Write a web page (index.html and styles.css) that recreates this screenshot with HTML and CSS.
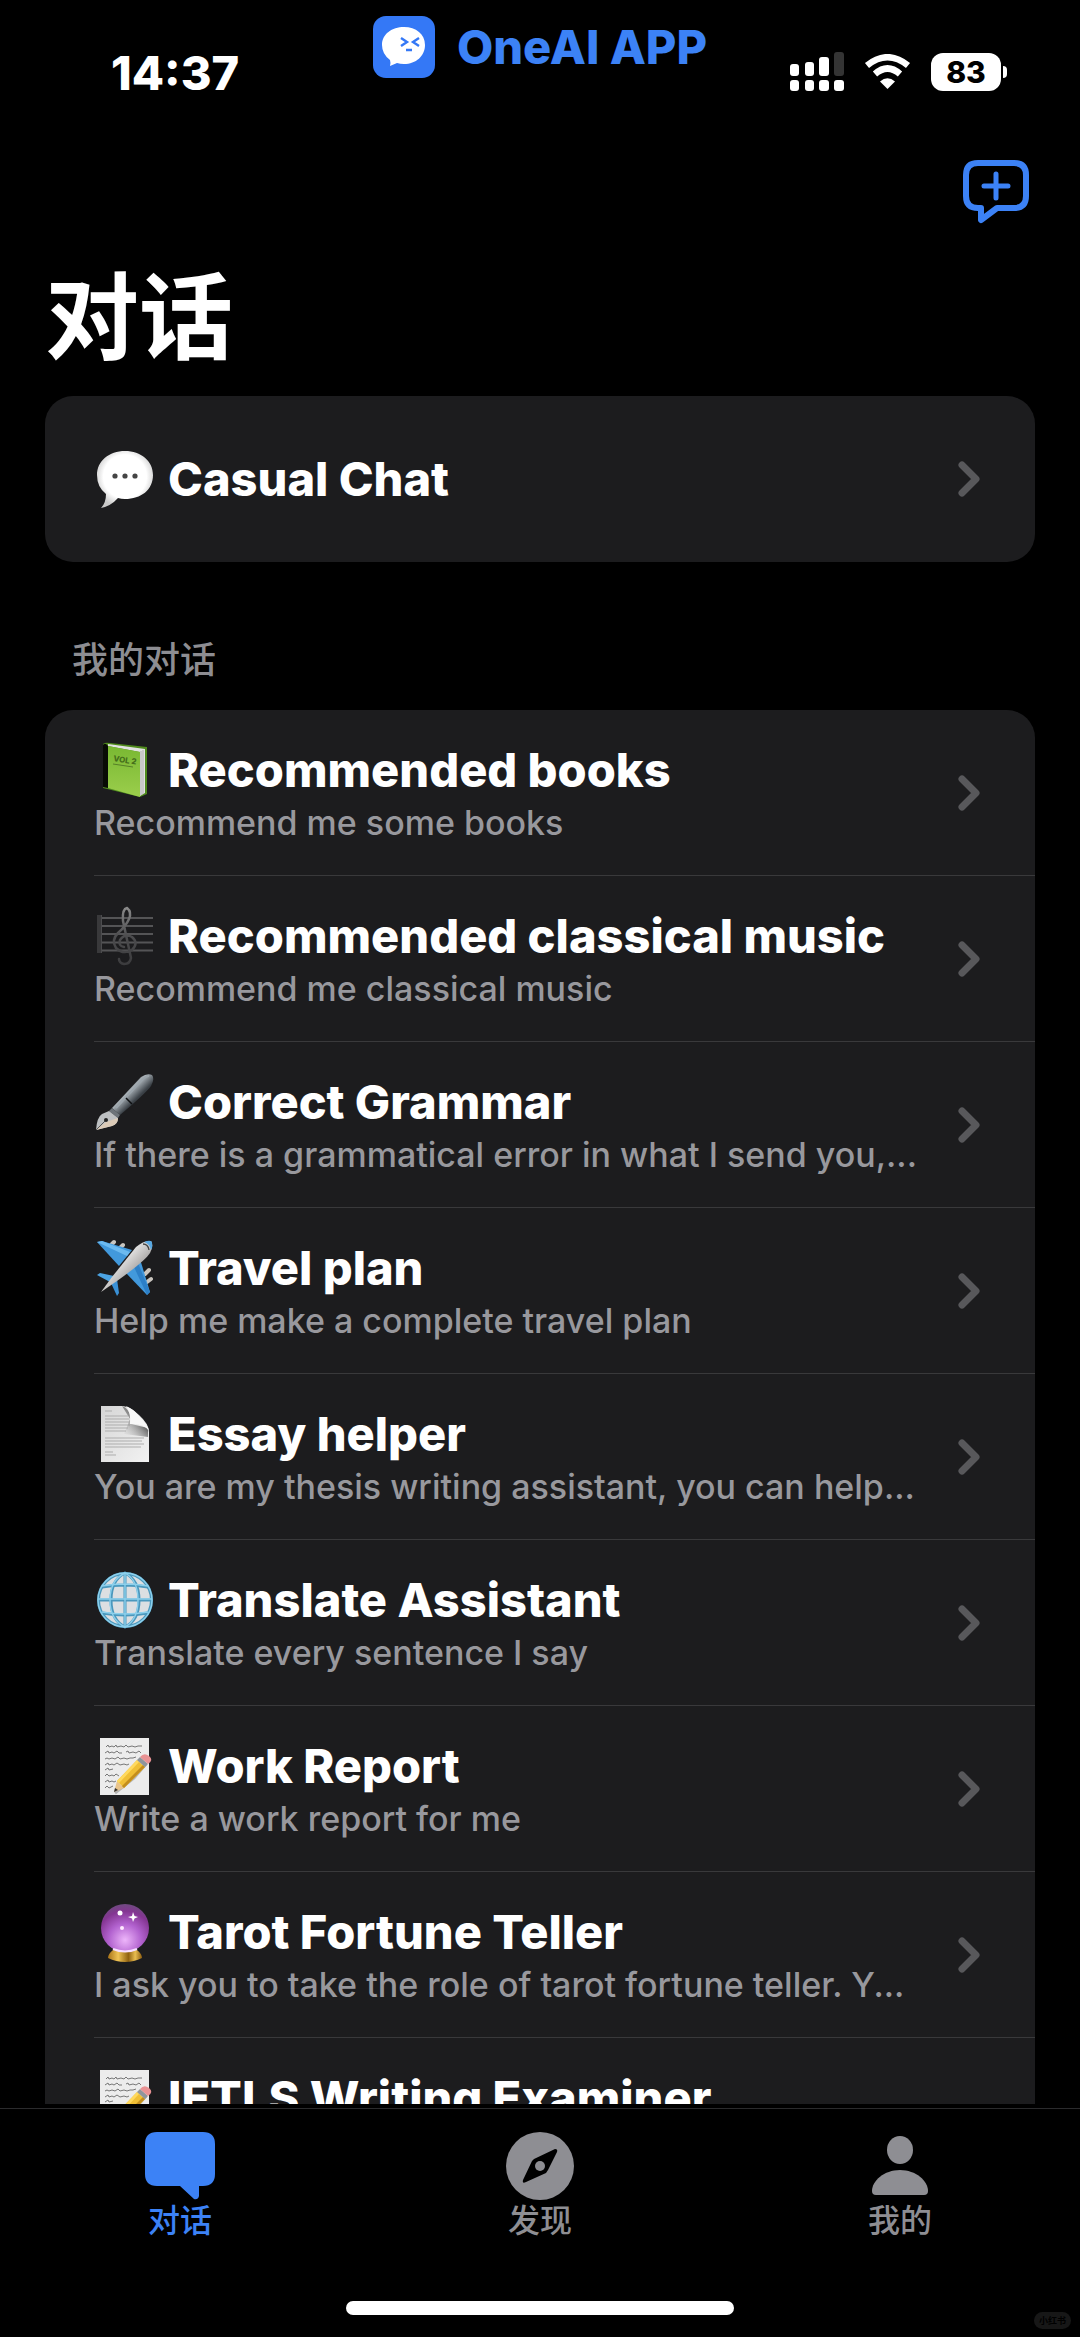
FILE: index.html
```html
<!DOCTYPE html>
<html lang="zh-CN">

<head>
    <meta charset="UTF-8">
    <meta name="viewport" content="width=device-width, initial-scale=1.0">
    <title>对话</title>
    <link rel="stylesheet" href="styles.css">
</head>

<body>
    <!-- shared icons -->
    <svg class="defs" width="0" height="0" aria-hidden="true">
        <defs>
            <linearGradient id="bookGreen" x1="0" y1="0" x2="0" y2="1">
                <stop offset="0" stop-color="#79b832"/>
                <stop offset="1" stop-color="#9bce4c"/>
            </linearGradient>
            <radialGradient id="bubbleWhite" cx="0.5" cy="0.45" r="0.55">
                <stop offset="0.7" stop-color="#fff"/>
                <stop offset="1" stop-color="#c9c9c9"/>
            </radialGradient>
            <linearGradient id="clefGrey" x1="0" y1="0" x2="0" y2="1">
                <stop offset="0" stop-color="#8a8a8a"/>
                <stop offset="0.5" stop-color="#4c4c4e"/>
                <stop offset="1" stop-color="#3c3c3e"/>
            </linearGradient>
            <linearGradient id="penBody" x1="0" y1="0" x2="1" y2="1">
                <stop offset="0.2" stop-color="#2c3238"/>
                <stop offset="0.42" stop-color="#aab2b8"/>
                <stop offset="0.6" stop-color="#3a4046"/>
                <stop offset="1" stop-color="#14171a"/>
            </linearGradient>
            <linearGradient id="planeBody" x1="0" y1="0" x2="1" y2="1">
                <stop offset="0.3" stop-color="#f8f8f8"/>
                <stop offset="0.7" stop-color="#9b9897"/>
            </linearGradient>
            <linearGradient id="paper" x1="0" y1="0" x2="1" y2="1">
                <stop offset="0" stop-color="#d6d6d6"/>
                <stop offset="1" stop-color="#f2f2f2"/>
            </linearGradient>
            <linearGradient id="foldShade" x1="1" y1="0" x2="0" y2="1">
                <stop offset="0.3" stop-color="#444"/>
                <stop offset="1" stop-color="#ccc" stop-opacity="0"/>
            </linearGradient>
            <radialGradient id="ball" cx="0.5" cy="0.75" r="0.75">
                <stop offset="0" stop-color="#edb5fa"/>
                <stop offset="0.45" stop-color="#b262cf"/>
                <stop offset="0.8" stop-color="#843592"/>
                <stop offset="1" stop-color="#6f4a80"/>
            </radialGradient>
            <linearGradient id="gold" x1="0" y1="0" x2="1" y2="0">
                <stop offset="0" stop-color="#a87318"/>
                <stop offset="0.3" stop-color="#f0c455"/>
                <stop offset="0.6" stop-color="#8f6110"/>
                <stop offset="0.8" stop-color="#e9bd50"/>
                <stop offset="1" stop-color="#8d5d10"/>
            </linearGradient>
        </defs>
        <symbol id="chevron" viewBox="0 0 22 36">
            <path d="M4 4L18 18L4 32" fill="none" stroke="#58585b" stroke-width="7" stroke-linecap="round" stroke-linejoin="round"/>
        </symbol>
        <symbol id="memo" viewBox="0 0 60 60">
            <rect x="6" y="2" width="49" height="57" fill="#ececec"/>
            <g fill="none" stroke="#777" stroke-width="1">
                <path d="M12 11l2-2 1 2 3-1 2 1 2-2 1 2 4-1 3 1 2-2 2 2 4-1 3 1 3-1 4 0"/>
                <path d="M11 17l3-2 1 2 3-1 2 1 3-2 2 2 3 0m4-1l2-1 1 2 4-1 3 1 3-2 2 2"/>
                <path d="M11 23l2-1 2 1 3-1 3 1 3-2 2 2 4-1 3 1 3-1 3 0 3-1"/>
                <path d="M11 29l3-2 1 2 3-1 2 1 3-2 3 2 4-1 3 1 2-1"/>
                <path d="M11 34l3-2 1 2 4-1"/>
                <path d="M11 40l2-2 2 2 3-1 2 1 2-2 3 2"/>
                <path d="M11 46l3-2 1 2 3-1 2 1 2-1"/>
                <path d="M11 52l2-2 2 2 4-2"/>
            </g>
            <path d="M21 57l19-15 12-14" fill="none" stroke="#b5b5b5" stroke-width="3"/>
            <path d="M20 56L23 45L30 52Z" fill="#e9c48a"/>
            <path d="M20 56L21 52L24 54Z" fill="#333"/>
            <path d="M23 45L43 24L51 31L30 52Z" fill="#f0bf35"/>
            <path d="M23 45L43 24L45 26L25 47Z" fill="#ffd95e"/>
            <path d="M28 50L49 29L51 31L30 52Z" fill="#c48e1c"/>
            <path d="M43 24L46 21L54 28L51 31Z" fill="#8f959b"/>
            <path d="M46 21Q50 16 55 20Q60 24 54 28Z" fill="#e99294"/>
        </symbol>
    </svg>

    <header class="status">
        <time class="time">14:37</time>
        <div class="brand">
            <svg width="62" height="62" viewBox="0 0 62 62" aria-hidden="true">
                <rect width="62" height="62" rx="13" fill="#3478f6"/>
                <path d="M31 11C43 11 52 18 52 29C52 40 43 48 31 48Q27 48 24 47L17 50Q18 47 17 44Q9 38 9 29C9 18 19 11 31 11Z" fill="#fff"/>
                <path d="M28 22l6 4-6 4M46 22l-6 4 6 4M33 34h6" fill="none" stroke="#3478f6" stroke-width="2.4"/>
            </svg>
            <span>OneAI APP</span>
        </div>
        <div class="signals">
            <svg width="54" height="40" viewBox="0 0 54 40" fill="#fff" aria-hidden="true">
                <rect x="0" y="12" width="9" height="12" rx="3"/>
                <rect x="15" y="10" width="9" height="14" rx="3"/>
                <rect x="29" y="5" width="10" height="19" rx="3"/>
                <rect x="44" y="0" width="10" height="24" rx="3" fill="#343434"/>
                <rect x="0" y="28" width="9" height="11" rx="3"/>
                <rect x="15" y="28" width="9" height="11" rx="3"/>
                <rect x="29" y="28" width="10" height="11" rx="3"/>
                <rect x="44" y="28" width="10" height="11" rx="3"/>
            </svg>
            <svg width="47" height="36" viewBox="0 0 47 36" aria-hidden="true">
                <path d="M3 11.5Q23.5 -5 44 11.5M11 20Q23.5 9 36 20" fill="none" stroke="#fff" stroke-width="6.5"/>
                <path d="M23.5 35L16 27.5Q23.5 21 31 27.5Z" fill="#fff"/>
            </svg>
            <div class="battery">83</div>
        </div>
    </header>

    <main class="page">
        <div class="toolbar">
            <button class="add" type="button" aria-label="新建对话">
                <svg width="66" height="64" viewBox="0 0 66 64" fill="none" stroke="#3c82f6" stroke-width="6" stroke-linecap="round" stroke-linejoin="round" aria-hidden="true">
                    <path d="M15 3H51Q63 3 63 15V36Q63 48 51 48H34L18 60V48H15Q3 48 3 36V15Q3 3 15 3Z"/>
                    <path d="M33 14V38M21 26H45" stroke-width="5"/>
                </svg>
            </button>
        </div>
        <h1>对话</h1>

        <ul class="card">
            <li>
                <a class="row" href="#">
                    <div class="info">
                        <h2>
                            <svg class="emoji" viewBox="0 0 60 60" aria-hidden="true">
                                <path d="M31 2C47 2 59 12 59 26C59 41 47 50 31 50Q27 50 24 49Q17 57 7 59Q12 54 12 45Q3 38 3 26C3 12 15 2 31 2Z" fill="url(#bubbleWhite)"/>
                                <circle cx="21" cy="27" r="2.6" fill="#444"/>
                                <circle cx="31" cy="27" r="2.6" fill="#444"/>
                                <circle cx="41" cy="27" r="2.6" fill="#444"/>
                            </svg>
                            Casual Chat
                        </h2>
                    </div>
                    <svg class="arrow"><use href="#chevron"/></svg>
                </a>
            </li>
        </ul>

        <p class="label">我的对话</p>

        <ul class="card">
            <li>
                <a class="row" href="#">
                    <div class="info">
                        <h2>
                            <svg class="emoji" viewBox="0 0 60 60" aria-hidden="true">
                                <path d="M9 4Q11 2 16 3L53 7V54L46 57L9 48Z" fill="#4f8a1d"/>
                                <path d="M14 4L51 9V53L46 56V12L14 6Z" fill="#e2e2e2"/>
                                <path d="M49 10V54M47 11V55" stroke="#a5a5a5" stroke-width="0.8"/>
                                <path d="M9 5Q11 2 14 6V48L9 47Z" fill="#080b05"/>
                                <path d="M14 6L46 12V57L14 48Z" fill="url(#bookGreen)"/>
                                <text x="19" y="21" font-size="8" transform="rotate(9 19 21)" fill="#456e1b">VOL 2</text>
                                <path d="M19 24L39 27" stroke="#567f28" stroke-width="1"/>
                            </svg>
                            Recommended books
                        </h2>
                        <p>Recommend me some books</p>
                    </div>
                    <svg class="arrow"><use href="#chevron"/></svg>
                </a>
            </li>
            <li>
                <a class="row" href="#">
                    <div class="info">
                        <h2>
                            <svg class="emoji" viewBox="0 0 60 60" aria-hidden="true">
                                <path d="M8 12H59M8 20H59M8 28H59M8 36.5H59M8 44.5H59" stroke="#545456" stroke-width="1.8"/>
                                <rect x="3" y="9" width="4" height="38" fill="#39393b"/>
                                <path d="M7.5 9V47" stroke="#4c4c4e"/>
                                <path d="M29 15Q28 3 33 2Q38 6 35 13Q32 20 24 27Q17 34 22 42Q29 49 38 44Q45 37 38 31Q31 27 26 34Q24 40 30 41M29 15L37 52Q36 58 30 58Q25 57 25 53" fill="none" stroke="url(#clefGrey)" stroke-width="2.5" stroke-linecap="round"/>
                            </svg>
                            Recommended classical music
                        </h2>
                        <p>Recommend me classical music</p>
                    </div>
                    <svg class="arrow"><use href="#chevron"/></svg>
                </a>
            </li>
            <li>
                <a class="row" href="#">
                    <div class="info">
                        <h2>
                            <svg class="emoji" viewBox="0 0 60 60" aria-hidden="true">
                                <path d="M18 36L47 5Q53 1 58 3Q61 7 57 14Q52 21 26 43Z" fill="url(#penBody)"/>
                                <path d="M22 36L48 8Q52 4 55 4" fill="none" stroke="#9ba4ab" stroke-width="2"/>
                                <path d="M32 26L38 32" stroke="#0d0f11" stroke-width="1.5"/>
                                <path d="M18 36L26 43L24 46L15 39Z" fill="#6d747a"/>
                                <path d="M15 39L24 46Q24 52 18 54L2 58Q3 45 8 42Z" fill="#bdc0c2"/>
                                <path d="M12 50L24 46Q24 52 18 54L2 58Z" fill="#dccbb8"/>
                                <path d="M2 58L11 49" stroke="#555" stroke-width="1"/>
                                <circle cx="12" cy="48" r="2" fill="#222"/>
                            </svg>
                            Correct Grammar
                        </h2>
                        <p>If there is a grammatical error in what I send you,...</p>
                    </div>
                    <svg class="arrow"><use href="#chevron"/></svg>
                </a>
            </li>
            <li>
                <a class="row" href="#">
                    <div class="info">
                        <h2>
                            <svg class="emoji" viewBox="0 0 60 60" aria-hidden="true">
                                <g stroke="#c9c5bf" stroke-width="4" stroke-linecap="round">
                                    <path d="M17 7L20 4M26 10L29 7M51 36L55 32M53 44L57 41"/>
                                </g>
                                <path d="M3 4L8 3L38 12L25 28Z" fill="#4299dc"/>
                                <path d="M3 4L8 3L36 14L33 18Z" fill="#6cbaf0"/>
                                <path d="M32 35L46 21L56 54L53 57Z" fill="#4299dc"/>
                                <path d="M44 25L56 54L53 57L40 29Z" fill="#2c7fc7"/>
                                <path d="M3 37L6 35L20 38L16 44Z" fill="#4ba3e3"/>
                                <path d="M17 45L23 41L25 55L23 58Z" fill="#3a90d6"/>
                                <path d="M7 54L18 39L42 9Q50 2 57 3Q60 7 56 15Q51 23 23 43Z" fill="url(#planeBody)"/>
                                <path d="M53 3Q58 2 58 5Q59 9 57 12Q56 6 50 4Z" fill="#58a9e4"/>
                                <path d="M49 6Q54 6 55 12" fill="none" stroke="#444" stroke-width="1.3"/>
                            </svg>
                            Travel plan
                        </h2>
                        <p>Help me make a complete travel plan</p>
                    </div>
                    <svg class="arrow"><use href="#chevron"/></svg>
                </a>
            </li>
            <li>
                <a class="row" href="#">
                    <div class="info">
                        <h2>
                            <svg class="emoji" viewBox="0 0 60 60" aria-hidden="true">
                                <path d="M7 2H29Q37 3 45 11Q55 20 55 28V58H7Z" fill="url(#paper)"/>
                                <path d="M11 7H18M11 12H34M11 15H35M11 18H35M11 21H36M11 24H34M11 27H32M11 34H50M11 37H48M11 40H50M11 43H47M11 48H19M11 51H22" stroke="#adadad" stroke-width="1"/>
                                <path d="M28 2Q37 5 37 20L54 24V33L30 30L36 15Z" fill="url(#foldShade)"/>
                                <path d="M32 2Q37 8 36 20Q50 19 55 27Q54 21 45 12Q38 4 32 2Z" fill="#f8f8f8"/>
                            </svg>
                            Essay helper
                        </h2>
                        <p>You are my thesis writing assistant, you can help...</p>
                    </div>
                    <svg class="arrow"><use href="#chevron"/></svg>
                </a>
            </li>
            <li>
                <a class="row" href="#">
                    <div class="info">
                        <h2>
                            <svg class="emoji" viewBox="0 0 60 60" aria-hidden="true">
                                <circle cx="31" cy="30" r="27" fill="#dcdfe2"/>
                                <g fill="none" stroke="#4b98bd" stroke-width="3">
                                    <circle cx="31" cy="30" r="26.5"/>
                                    <path d="M31 3V57M4 30H58M8 17Q31 13 54 17M8 43Q31 47 54 43"/>
                                    <path d="M31 3Q17 10 17 30Q17 50 31 57Q45 50 45 30Q45 10 31 3Z"/>
                                </g>
                                <g fill="none" stroke="#8dd0ec" stroke-width="1.4">
                                    <circle cx="31" cy="30" r="27"/>
                                    <path d="M31 3V57M4 29H58M8 16Q31 12 54 16M8 42Q31 46 54 42"/>
                                    <path d="M31 3Q16 10 16 30Q16 50 31 57Q44 50 44 30Q44 10 31 3Z"/>
                                </g>
                            </svg>
                            Translate Assistant
                        </h2>
                        <p>Translate every sentence I say</p>
                    </div>
                    <svg class="arrow"><use href="#chevron"/></svg>
                </a>
            </li>
            <li>
                <a class="row" href="#">
                    <div class="info">
                        <h2>
                            <svg class="emoji"><use href="#memo"/></svg>
                            Work Report
                        </h2>
                        <p>Write a work report for me</p>
                    </div>
                    <svg class="arrow"><use href="#chevron"/></svg>
                </a>
            </li>
            <li>
                <a class="row" href="#">
                    <div class="info">
                        <h2>
                            <svg class="emoji" viewBox="0 0 60 60" aria-hidden="true">
                                <path d="M19 48H43Q48 52 48 56Q40 60 31 60Q22 60 14 56Q14 52 19 48Z" fill="url(#gold)"/>
                                <circle cx="31" cy="26" r="24" fill="url(#ball)"/>
                                <path d="M19 47Q31 52 43 47" fill="none" stroke="#f7e0ff" stroke-width="2"/>
                                <circle cx="26" cy="11" r="2.5" fill="#fff"/>
                                <path d="M39 10l1.5 4 3.5 1-3.5 1.5-1.5 3.5-1-3.5-4-1.5 4-1Z" fill="#fff"/>
                                <circle cx="28" cy="26" r="2" fill="#ffe9ff"/>
                            </svg>
                            Tarot Fortune Teller
                        </h2>
                        <p>I ask you to take the role of tarot fortune teller. Y...</p>
                    </div>
                    <svg class="arrow"><use href="#chevron"/></svg>
                </a>
            </li>
            <li>
                <a class="row" href="#">
                    <div class="info">
                        <h2>
                            <svg class="emoji"><use href="#memo"/></svg>
                            IETLS Writing Examiner
                        </h2>
                        <p></p>
                    </div>
                </a>
            </li>
        </ul>
    </main>

    <footer class="tabbar">
        <nav class="tabs">
            <a class="tab active" href="#">
                <svg width="72" height="70" viewBox="0 0 72 70" fill="currentColor" aria-hidden="true">
                    <path d="M13 1H59Q71 1 71 13V43Q71 55 59 55H55V65Q54 69 50 68L36 55H13Q1 55 1 43V13Q1 1 13 1Z"/>
                </svg>
                对话
            </a>
            <a class="tab" href="#">
                <svg width="72" height="70" viewBox="0 0 72 70" aria-hidden="true">
                    <circle cx="36" cy="35" r="34" fill="currentColor"/>
                    <path d="M51 18Q54 18 53 21L44 39L42 42L22 51Q18 53 19 49L28 30L30 28Z" fill="#000"/>
                    <circle cx="36" cy="35" r="5" fill="currentColor"/>
                </svg>
                发现
            </a>
            <a class="tab" href="#">
                <svg width="72" height="70" viewBox="0 0 72 70" fill="currentColor" aria-hidden="true">
                    <ellipse cx="36" cy="19" rx="13" ry="14"/>
                    <path d="M8 60C8 50 20 39 36 39C52 39 64 50 64 60Q64 64 60 64H12Q8 64 8 60Z"/>
                </svg>
                我的
            </a>
        </nav>
        <div class="home"></div>
        <span class="mark">小红书</span>
    </footer>
</body>

</html>
```

FILE: styles.css
```css
* {
    margin: 0;
    padding: 0;
    box-sizing: border-box;
}

body {
    display: flex;
    flex-direction: column;
    height: 100vh;
    background-color: #000;
    color: #fff;
    font-family: Inter, "Noto Sans CJK SC", sans-serif;
    overflow: hidden;
}

a {
    color: inherit;
    text-decoration: none;
}

ul {
    list-style: none;
}

svg {
    display: block;
    flex-shrink: 0;
}

.defs {
    position: absolute;
}

/* status bar */
.status {
    display: grid;
    grid-template-columns: 1fr auto 1fr;
    align-items: center;
    height: 144px;
    padding: 0 73px 0 111px;
    flex-shrink: 0;
}

.time {
    font-size: 47px;
    font-weight: 800;
}

.brand {
    display: flex;
    align-items: center;
    align-self: start;
    gap: 22px;
    margin-top: 16px;
    margin-right: 38px;
    color: #3c82f6;
    font-size: 47px;
    font-weight: 800;
    line-height: 62px;
}

.signals {
    display: flex;
    align-items: center;
    justify-content: flex-end;
    gap: 20px;
}

.battery {
    position: relative;
    width: 70px;
    margin-right: 6px;
    border-radius: 12px;
    background-color: #fff;
    color: #000;
    font-size: 30px;
    font-weight: 800;
    line-height: 38px;
    text-align: center;
}

.battery::after {
    content: "";
    position: absolute;
    top: 13px;
    right: -6px;
    width: 4px;
    height: 12px;
    border-radius: 0 4px 4px 0;
    background-color: #fff;
}

/* page */
.page {
    flex: 1;
    min-height: 0;
    padding: 0 45px;
    overflow: hidden;
}

.toolbar {
    display: flex;
    align-items: center;
    justify-content: flex-end;
    height: 96px;
    padding-right: 6px;
}

.add {
    border: none;
    background: none;
    cursor: pointer;
}

h1 {
    font-size: 94px;
    font-weight: 700;
    line-height: 156px;
}

.card {
    border-radius: 28px;
    background-color: #1c1c1e;
    overflow: hidden;
}

.card li {
    padding-left: 49px;
}

.row {
    display: flex;
    align-items: center;
    gap: 24px;
    height: 166px;
    padding-right: 55px;
}

.card li + li .row {
    box-shadow: 0 -1px #39393b;
}

.info {
    flex: 1;
    min-width: 0;
    white-space: nowrap;
}

.info h2 {
    display: flex;
    align-items: center;
    gap: 14px;
    font-size: 47px;
    font-weight: 800;
    line-height: 60px;
}

.info p {
    min-height: 46px;
    overflow: hidden;
    color: #98989d;
    font-size: 34px;
    font-weight: 500;
    line-height: 46px;
    text-overflow: ellipsis;
}

.emoji {
    width: 60px;
    height: 60px;
}

.arrow {
    width: 22px;
    height: 36px;
}

.label {
    margin: 73px 0 25px;
    padding-left: 27px;
    color: #8d8d92;
    font-size: 36px;
    font-weight: 500;
    line-height: 50px;
}

/* bottom tabs */
.tabbar {
    position: relative;
    flex-shrink: 0;
    margin-top: 4px;
    padding: 22px 0;
    border-top: 1px solid #2b2b2d;
}

.tabs {
    display: flex;
}

.tab {
    display: flex;
    flex: 1;
    flex-direction: column;
    align-items: center;
    color: #8e8e93;
    font-size: 32px;
    font-weight: 500;
    line-height: 40px;
}

.tab.active {
    color: #3c82f6;
}

.home {
    width: 36%;
    height: 14px;
    margin: 60px auto 0;
    border-radius: 7px;
    background-color: #fff;
}

.mark {
    position: absolute;
    right: 9px;
    bottom: 8px;
    padding: 0 5px;
    border-radius: 9px;
    background-color: #171717;
    color: #000;
    font-size: 9px;
    font-weight: 700;
    line-height: 17px;
}
```
